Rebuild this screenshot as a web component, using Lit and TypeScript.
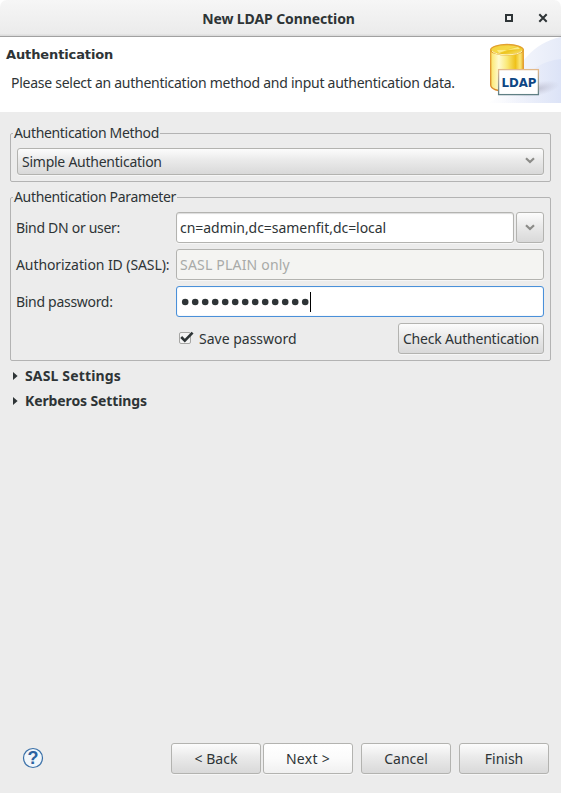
import { LitElement, html, css, svg } from "lit";
import { customElement, property } from "lit/decorators.js";

const chevron = html`<svg class="chevron" width="10" height="7" viewBox="0 0 10 7">
  <path d="M1 1.2 L5 5 L9 1.2" fill="none" stroke="#8b8b88" stroke-width="2.2" />
</svg>`;

@customElement("ldap-banner")
class LdapBanner extends LitElement {
  static styles = css`
    :host { display: block; width: 74px; height: 66px; }
    svg { display: block; }
    text { font: bold 12.4px "DejaVu Sans", sans-serif; }
  `;
  render() {
    return html`<svg width="74" height="66" viewBox="0 0 74 66">
      <defs>
        <linearGradient id="body" x1="0" x2="1">
          <stop offset="0" stop-color="#fbe66a" />
          <stop offset=".25" stop-color="#fffbd0" />
          <stop offset=".5" stop-color="#fae978" />
          <stop offset=".76" stop-color="#efc11a" />
          <stop offset=".9" stop-color="#fbe779" />
          <stop offset="1" stop-color="#e9b52a" />
        </linearGradient>
        <linearGradient id="top" x1="0" y1="0" x2="1" y2="1">
          <stop offset="0" stop-color="#f3cf32" />
          <stop offset=".45" stop-color="#f6d94a" />
          <stop offset=".6" stop-color="#edc51f" />
          <stop offset="1" stop-color="#fbea86" />
        </linearGradient>
        <linearGradient id="edge" x1="0" y1="0" x2="0" y2="1">
          <stop offset="0" stop-color="#e8a838" />
          <stop offset="1" stop-color="#d9882c" />
        </linearGradient>
        <linearGradient id="plate" x1="0" y1="0" x2="0" y2="1">
          <stop offset="0" stop-color="#e3b98a" />
          <stop offset=".5" stop-color="#a2a094" />
          <stop offset="1" stop-color="#5f7f84" />
        </linearGradient>
        <linearGradient id="sky" x1="0" y1="0" x2="1" y2="0">
          <stop offset="0" stop-color="#ffffff" />
          <stop offset=".45" stop-color="#f3f5fc" />
          <stop offset="1" stop-color="#e6ebf8" />
        </linearGradient>
        <linearGradient id="sky2" x1="0" y1="0" x2="1" y2="0">
          <stop offset="0" stop-color="#eef1fb" stop-opacity="0" />
          <stop offset="1" stop-color="#dce3f7" />
        </linearGradient>
        <radialGradient id="shade">
          <stop offset="0" stop-color="#a9a9bb" stop-opacity=".6" />
          <stop offset="1" stop-color="#b8b8cc" stop-opacity="0" />
        </radialGradient>
      </defs>
      <path d="M0 66 C24 60 28 9 74 0 V66 Z" fill="url(#sky)" />
      <path d="M14 66 C34 55 36 26 74 22 V66 Z" fill="url(#sky2)" />
      <ellipse cx="50" cy="52" rx="23" ry="7" transform="rotate(-12 50 52)" fill="url(#shade)" />
      <path d="M3.7 13 V48 C3.7 52 11 54.5 20 54.5 S36.3 52 36.3 48 V13 Z" fill="url(#body)" stroke="url(#edge)" stroke-width="1.4" />
      <ellipse cx="20" cy="12.7" rx="16.3" ry="5.2" fill="url(#top)" stroke="#e2a02f" stroke-width="1.3" />
      <path d="M5 14 C8 19 32 19 35 14" fill="none" stroke="#fff6b2" stroke-width="1" />
      <path d="M20 13 L31 10 L33 12 Z M20 13 L10 13 L12 16 Z" fill="#fbeb86" />
      <rect x="11.6" y="32.6" width="39.8" height="25" fill="#fff" stroke="url(#plate)" stroke-width="1.3" />
      <text x="14.5" y="50" textLength="35" lengthAdjust="spacingAndGlyphs" fill="#0e4684">LDAP</text>
    </svg>`;
  }
}

@customElement("gtk-group")
class GtkGroup extends LitElement {
  @property() label = "";
  static styles = css`
    :host { display: block; }
    fieldset {
      box-sizing: border-box; margin: 0; min-width: 0; height: 100%;
      border: 1px solid #b3b3b3; border-radius: 2px; padding: 0 6px 6px;
    }
    legend { height: 14px; line-height: 14px; padding: 0 1px; margin-left: -4px; white-space: nowrap; letter-spacing: -0.33px; }
  `;
  render() {
    return html`<fieldset><legend>${this.label}</legend><slot></slot></fieldset>`;
  }
}

@customElement("app-root")
class AppRoot extends LitElement {
  static styles = css`
    :host {
      display: flex; flex-direction: column; box-sizing: border-box;
      width: 561px; height: 793px; overflow: hidden; background: #ececec; color: #2e3436;
      font: 14px "Noto Sans", "Open Sans", sans-serif; white-space: nowrap;
    }
    .titlebar {
      box-sizing: border-box; height: 37px; flex: none;
      display: grid; grid-template-columns: 1fr auto 1fr; align-items: center;
      border-bottom: 1px solid #a1a1a1; border-radius: 7px 7px 0 0;
      background: linear-gradient(#f6f6f6, #ebebeb 34px, #dcdcdc 35px);
    }
    .frame { flex: none; background: #fff; }
    .title { grid-column: 2; font-weight: 700; letter-spacing: -0.1px; padding-right: 4px; }
    .window-buttons { display: flex; justify-content: flex-end; gap: 24px; padding-right: 13px; }
    .header { height: 75px; flex: none; background: #fff; display: flex; justify-content: space-between; }
    .header-text { padding-top: 9px; }
    .heading { font: bold 13px/18px "DejaVu Sans", sans-serif; padding-left: 6px; letter-spacing: -0.12px; }
    .description { line-height: 20px; padding: 9px 0 0 11px; letter-spacing: -0.265px; }
    .content { flex: 1; padding: 14px 10px 0; }
    .method { height: 56px; }
    .parameter { height: 171px; margin-top: 8px; }
    .control {
      box-sizing: border-box; height: 31px; border: 1px solid #b3b3b0; border-radius: 3px;
      display: flex; align-items: center; box-shadow: 0 1px 0 #f6f6f6;
    }
    .raised { background: linear-gradient(#fcfcfc, #eaeaea 45%, #d9d9d9); }
    .combo { height: 27px; margin-top: 8px; padding: 0 8px 0 4px; justify-content: space-between; letter-spacing: -0.25px; }
    .combo .chevron { margin-top: -2px; }
    .form { display: grid; grid-template-columns: 159px 1fr; grid-auto-rows: 31px; gap: 6px 0; align-items: center; margin-top: 8px; }
    .label { margin-left: -1px; letter-spacing: -0.3px; }
    .auth-id { letter-spacing: -0.08px; }
    .with-menu { display: grid; grid-template-columns: 1fr 28px; gap: 2px; }
    .entry { background: #fff; padding: 0 3px; box-shadow: inset 0 1px 1px #dcdcdc, 0 1px 0 #f6f6f6; }
    .dn { letter-spacing: -0.04px; }
    .disabled { background: #f4f4f2; color: #a8aaa8; box-shadow: 0 1px 0 #f6f6f6; letter-spacing: 0.2px; }
    .focused { border-color: #4a90d9; box-shadow: inset 0 0 1px #9bc0e8; }
    .menu-button { justify-content: center; }
    .actions { display: flex; justify-content: space-between; align-items: center; }
    .check { display: flex; align-items: center; gap: 5px; padding-left: 2px; }
    .check svg { margin-top: -2px; }
    .auth-button { width: 146px; justify-content: center; letter-spacing: -0.2px; }
    .expanders { padding: 2px 0 0 3px; }
    .expander { display: flex; align-items: center; gap: 7px; height: 25px; font-weight: 700; }
    .sasl { letter-spacing: 0.15px; }
    .kerberos { letter-spacing: -0.12px; }
    .footer { flex: none; height: 50px; display: flex; padding: 0 12px 0 22px; }
    .help { margin: 4px auto 0 0; }
    .help text { font: bold 18px "Liberation Sans", sans-serif; }
    .button { width: 90px; justify-content: center; }
    .next { background: linear-gradient(#fff, #fbfbfb 50%, #f0f0f0); margin: 0 8px 0 2px; letter-spacing: 0.3px; }
    .finish { margin-left: 8px; }
  `;

  private expander(label: string, name: string) {
    return html`<div class="expander ${name}">
      <svg width="5" height="8" viewBox="0 0 5 8"><path d="M0 0 L4.6 4 L0 8 Z" fill="#2e3436" /></svg>
      <span>${label}</span>
    </div>`;
  }

  render() {
    return html`
      <div class="frame"><div class="titlebar">
        <span class="title">New LDAP Connection</span>
        <div class="window-buttons">
          <svg width="10" height="10" viewBox="0 0 10 10"><rect x="2" y="2" width="6" height="6" fill="none" stroke="#2e3436" stroke-width="2" /></svg>
          <svg width="10" height="10" viewBox="0 0 10 10"><path d="M1.3 1.3 L8.7 8.7 M8.7 1.3 L1.3 8.7" stroke="#2e3436" stroke-width="2" /></svg>
        </div>
      </div></div>
      <div class="header">
        <div class="header-text">
          <div class="heading">Authentication</div>
          <div class="description">Please select an authentication method and input authentication data.</div>
        </div>
        <ldap-banner></ldap-banner>
      </div>
      <div class="content">
        <gtk-group class="method" label="Authentication Method">
          <div class="control raised combo"><span>Simple Authentication</span>${chevron}</div>
        </gtk-group>
        <gtk-group class="parameter" label="Authentication Parameter">
          <div class="form">
            <span class="label">Bind DN or user:</span>
            <div class="with-menu">
              <div class="control entry"><span class="dn">cn=admin,dc=samenfit,dc=local</span></div>
              <div class="control raised menu-button">${chevron}</div>
            </div>
            <span class="label auth-id">Authorization ID (SASL):</span>
            <div class="control entry disabled"><span>SASL PLAIN only</span></div>
            <span class="label">Bind password:</span>
            <div class="control entry focused">
              <svg width="132" height="21" viewBox="0 0 132 21">
                ${Array.from({ length: 13 }, (_, i) => svg`<circle cx=${5.2 + i * 10} cy="11" r="3.3" fill="#2e3436" />`)}
                <rect x="130" y="1" width="1" height="20" fill="#000" />
              </svg>
            </div>
            <span></span>
            <div class="actions">
              <div class="check">
                <svg width="16" height="14" viewBox="0 0 16 14">
                  <rect x="1.5" y="1.5" width="11" height="11" rx="1.5" fill="#f4f4f4" stroke="#a6a6a4" />
                  <path d="M3.2 6 L6.8 9.6 L14.6 1.6" fill="none" stroke="#2e3436" stroke-width="2.6" />
                </svg>
                <span>Save password</span>
              </div>
              <div class="control raised auth-button"><span>Check Authentication</span></div>
            </div>
          </div>
        </gtk-group>
        <div class="expanders">${this.expander("SASL Settings", "sasl")}${this.expander("Kerberos Settings", "kerberos")}</div>
      </div>
      <div class="footer">
        <svg class="help" width="22" height="22" viewBox="0 0 22 22">
          <circle cx="11" cy="11" r="9.5" fill="#f1f6fa" stroke="#3a70a8" stroke-width="1.2" />
          <text x="11" y="17.2" text-anchor="middle" fill="#2b62a0">?</text>
        </svg>
        <div class="control raised button">&lt; Back</div>
        <div class="control raised button next">Next &gt;</div>
        <div class="control raised button">Cancel</div>
        <div class="control raised button finish">Finish</div>
      </div>
    `;
  }
}
